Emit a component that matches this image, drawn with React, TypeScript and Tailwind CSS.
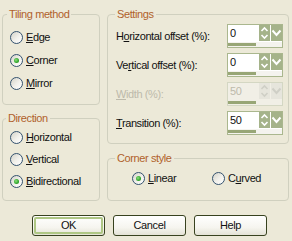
import React from "react";

const Radio = ({ checked }: { checked?: boolean }) => (
  <span className="w-[13px] h-[13px] rounded-full border border-[#34526F] bg-[linear-gradient(135deg,#D4D3C9_0%,#F2F1EC_55%,#FFFFFF_100%)] flex items-center justify-center shrink-0">
    {checked && (
      <span className="w-[5px] h-[5px] rounded-full bg-[radial-gradient(circle_at_40%_40%,#8BE07C_0%,#2FA52A_60%,#1E7A1E_100%)]" />
    )}
  </span>
);

const RadioRow = ({ label, u, checked }: { label: string; u: number; checked?: boolean }) => (
  <div className="flex items-center gap-[3px] h-[13px]">
    <Radio checked={checked} />
    <span className="leading-[13px]">
      {label.slice(0, u)}
      <u>{label[u]}</u>
      {label.slice(u + 1)}
    </span>
  </div>
);

const Spin = ({ value, disabled }: { value: string; disabled?: boolean }) => {
  const btn = disabled ? "bg-[#E6E5DC]" : "bg-[#A5B38A]";
  const arrow = disabled ? "#CFCFC6" : "#FFFFFF";
  return (
    <div
      className={`w-[56px] h-[24px] border flex flex-col ${
        disabled ? "border-[#D4D7C3] bg-[#F1EFE6]" : "border-[#AAB78E] bg-white"
      }`}
    >
      <div className="flex h-[17px]">
        <div className={`flex-1 pl-[2px] leading-[17px] ${disabled ? "text-[#BDBAAB]" : ""}`}>{value}</div>
        <div className={`w-[11px] h-[16px] ${btn}`}>
          <svg width="11" height="16" viewBox="0 0 11 16">
            <polyline points="2.5,6 5.5,3 8.5,6" fill="none" stroke={arrow} strokeWidth="1.6" />
            <polyline points="2.5,10 5.5,13 8.5,10" fill="none" stroke={arrow} strokeWidth="1.6" />
          </svg>
        </div>
        <div className={`w-[11px] h-[16px] ml-[1px] ${btn}`}>
          <svg width="11" height="16" viewBox="0 0 11 16">
            <polyline points="1.5,5.5 5.5,10 9.5,5.5" fill="none" stroke={arrow} strokeWidth="2" />
          </svg>
        </div>
      </div>
      <div className={`h-[5px] pt-[1px] ${disabled ? "bg-[#F1EFE6]" : "bg-[#F4F3EE]"}`}>
        <div className="w-[28px] h-[3px] bg-[#98A676]" />
      </div>
    </div>
  );
};

const Btn = ({ label, def }: { label: string; def?: boolean }) => (
  <div className="w-[73px] h-[21px] rounded-[3px] border border-[#38421F] bg-[linear-gradient(180deg,#FFFFFF_0%,#F6F5EF_60%,#E4E2D6_100%)] p-[1px]">
    <div
      className={`w-full h-full rounded-[2px] flex items-center justify-center leading-none ${
        def ? "border-[2px] border-[#AFC784]" : ""
      }`}
    >
      {label}
    </div>
  </div>
);

export default function App() {
  return (
    <div className="w-[292px] h-[241px] bg-[#ECE9D8] font-['Liberation_Sans',Arial,sans-serif] text-[11px] tracking-[-0.4px] text-[#111] overflow-hidden">
      <div className="flex pl-[2px] pt-[8px] gap-[7px]">
        <div className="w-[98px] flex flex-col gap-[7px]">
          <fieldset className="h-[97px] border border-[#D0D0BF] rounded-[4px]">
            <legend className="ml-[4px] px-[2px] leading-[13px] text-[#B0612B]">Tiling method</legend>
            <div className="flex flex-col gap-[10px] pt-[10px] pl-[7px]">
              <RadioRow label="Edge" u={0} />
              <RadioRow label="Corner" u={0} checked />
              <RadioRow label="Mirror" u={0} />
            </div>
          </fieldset>
          <fieldset className="h-[89px] border border-[#D0D0BF] rounded-[4px]">
            <legend className="ml-[3px] px-[2px] leading-[13px] text-[#B0612B]">Direction</legend>
            <div className="flex flex-col gap-[9px] pt-[6px] pl-[7px]">
              <RadioRow label="Horizontal" u={0} />
              <RadioRow label="Vertical" u={0} />
              <RadioRow label="Bidirectional" u={0} checked />
            </div>
          </fieldset>
        </div>
        <div className="w-[182px] flex flex-col gap-[8px]">
          <fieldset className="h-[136px] border border-[#D0D0BF] rounded-[4px]">
            <legend className="ml-[7px] px-[2px] leading-[13px] text-[#B0612B]">Settings</legend>
            <div className="flex flex-col gap-[5px] pt-[3px] pl-[8px] pr-[5px]">
              <div className="flex items-center justify-between">
                <span>
                  H<u>o</u>rizontal offset (%):
                </span>
                <Spin value="0" />
              </div>
              <div className="flex items-center justify-between">
                <span>
                  Ve<u>r</u>tical offset (%):
                </span>
                <Spin value="0" />
              </div>
              <div className="flex items-center justify-between">
                <span className="text-[#BDBAAB]">
                  <u>W</u>idth (%):
                </span>
                <Spin value="50" disabled />
              </div>
              <div className="flex items-center justify-between">
                <span>
                  <u>T</u>ransition (%):
                </span>
                <Spin value="50" />
              </div>
            </div>
          </fieldset>
          <fieldset className="h-[49px] border border-[#D0D0BF] rounded-[4px]">
            <legend className="ml-[7px] px-[2px] leading-[13px] text-[#B0612B]">Corner style</legend>
            <div className="flex pt-[7px] pl-[24px]">
              <div className="w-[80px]">
                <RadioRow label="Linear" u={0} checked />
              </div>
              <RadioRow label="Curved" u={1} />
            </div>
          </fieldset>
        </div>
      </div>
      <div className="flex gap-[8px] pl-[32px] pt-[14px]">
        <Btn label="OK" def />
        <Btn label="Cancel" />
        <Btn label="Help" />
      </div>
    </div>
  );
}
